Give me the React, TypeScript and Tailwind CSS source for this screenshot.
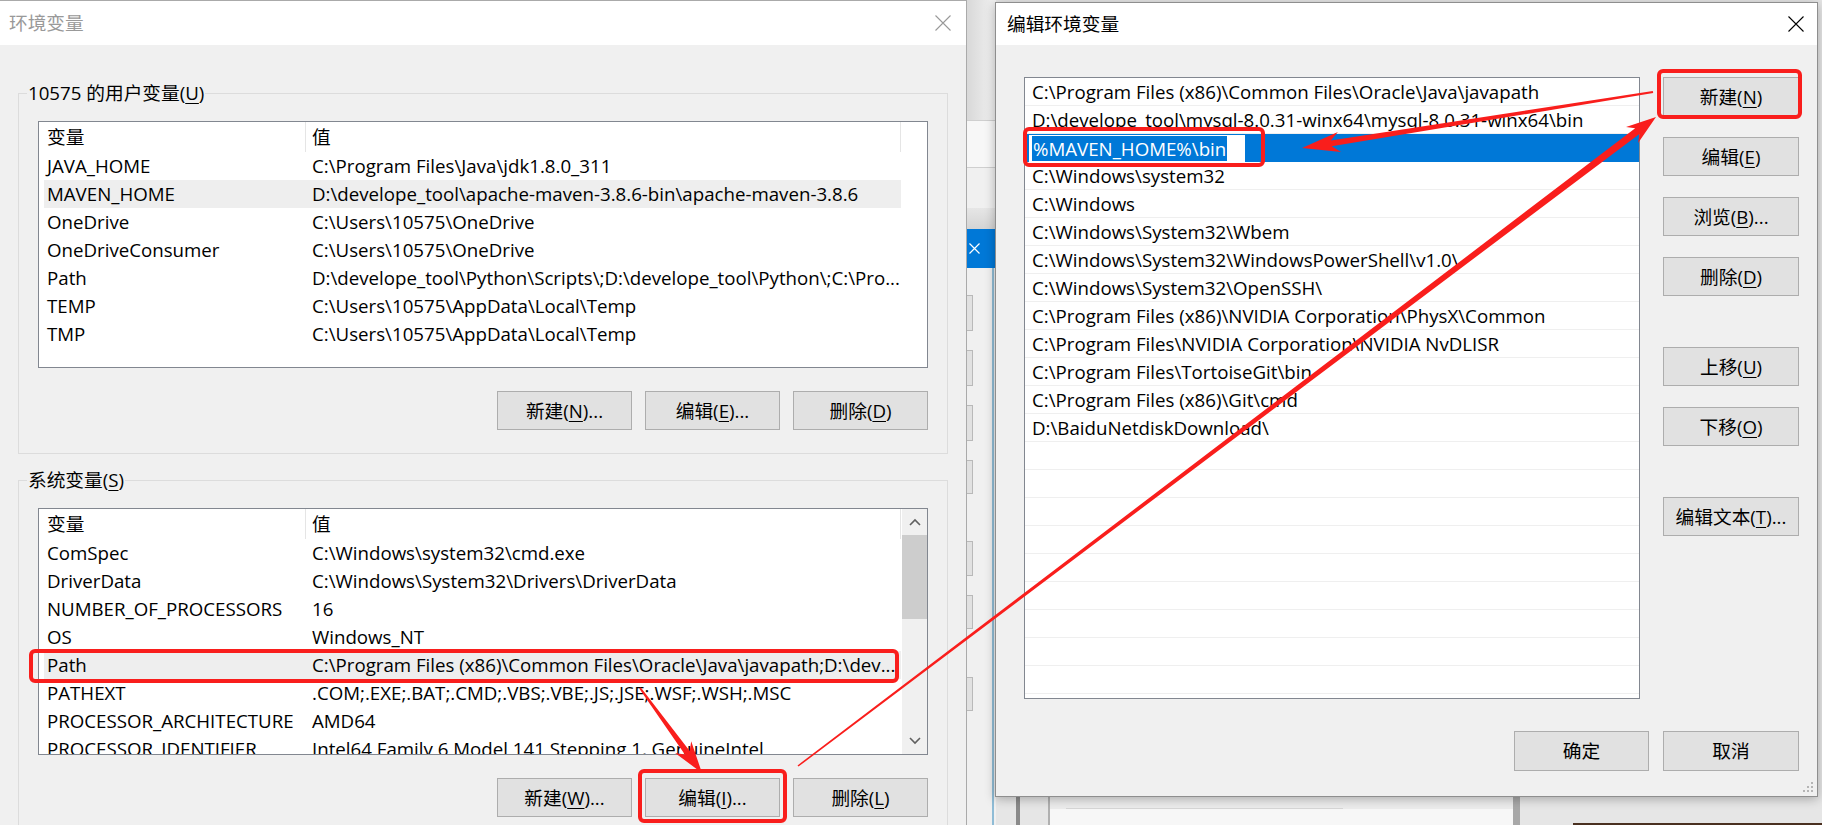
import React from "react";

const RED = "#f91e1c";

const userVars: [string, string][] = [
  ["JAVA_HOME", "C:\\Program Files\\Java\\jdk1.8.0_311"],
  ["MAVEN_HOME", "D:\\develope_tool\\apache-maven-3.8.6-bin\\apache-maven-3.8.6"],
  ["OneDrive", "C:\\Users\\10575\\OneDrive"],
  ["OneDriveConsumer", "C:\\Users\\10575\\OneDrive"],
  ["Path", "D:\\develope_tool\\Python\\Scripts\\;D:\\develope_tool\\Python\\;C:\\Pro..."],
  ["TEMP", "C:\\Users\\10575\\AppData\\Local\\Temp"],
  ["TMP", "C:\\Users\\10575\\AppData\\Local\\Temp"],
];

const sysVars: [string, string][] = [
  ["ComSpec", "C:\\Windows\\system32\\cmd.exe"],
  ["DriverData", "C:\\Windows\\System32\\Drivers\\DriverData"],
  ["NUMBER_OF_PROCESSORS", "16"],
  ["OS", "Windows_NT"],
  ["Path", "C:\\Program Files (x86)\\Common Files\\Oracle\\Java\\javapath;D:\\dev..."],
  ["PATHEXT", ".COM;.EXE;.BAT;.CMD;.VBS;.VBE;.JS;.JSE;.WSF;.WSH;.MSC"],
  ["PROCESSOR_ARCHITECTURE", "AMD64"],
  ["PROCESSOR_IDENTIFIER", "Intel64 Family 6 Model 141 Stepping 1, GenuineIntel"],
];

const pathItems: string[] = [
  "C:\\Program Files (x86)\\Common Files\\Oracle\\Java\\javapath",
  "D:\\develope_tool\\mysql-8.0.31-winx64\\mysql-8.0.31-winx64\\bin",
  "%MAVEN_HOME%\\bin",
  "C:\\Windows\\system32",
  "C:\\Windows",
  "C:\\Windows\\System32\\Wbem",
  "C:\\Windows\\System32\\WindowsPowerShell\\v1.0\\",
  "C:\\Windows\\System32\\OpenSSH\\",
  "C:\\Program Files (x86)\\NVIDIA Corporation\\PhysX\\Common",
  "C:\\Program Files\\NVIDIA Corporation\\NVIDIA NvDLISR",
  "C:\\Program Files\\TortoiseGit\\bin",
  "C:\\Program Files (x86)\\Git\\cmd",
  "D:\\BaiduNetdiskDownload\\",
  "", "", "", "", "", "", "", "", "",
];

function U({ c }: { c: string }) {
  return <span className="underline decoration-1 underline-offset-[3px]">{c}</span>;
}

function Btn({ children, className = "" }: { children: React.ReactNode; className?: string }) {
  return (
    <div
      className={
        "flex items-center justify-center bg-[#e1e1e1] border border-[#adadad] whitespace-nowrap shrink-0 " +
        className
      }
    >
      {children}
    </div>
  );
}

function XIcon({ color }: { color: string }) {
  return (
    <svg width="16" height="16" viewBox="0 0 16 16">
      <path d="M0.5 0.5 L15.5 15.5 M15.5 0.5 L0.5 15.5" stroke={color} strokeWidth="1.1" fill="none" />
    </svg>
  );
}

function Chevron({ up }: { up?: boolean }) {
  return (
    <svg width="12" height="8" viewBox="0 0 12 8">
      <path
        d={up ? "M1 7 L6 2 L11 7" : "M1 1 L6 6 L11 1"}
        stroke="#606060"
        strokeWidth="1.6"
        fill="none"
      />
    </svg>
  );
}

function Header() {
  return (
    <div className="h-[30px] flex shrink-0">
      <div className="w-[267px] pl-[8px] flex items-center border-r border-[#e5e5e5]">变量</div>
      <div className="w-[595px] pl-[6px] flex items-center border-r border-[#e5e5e5]">值</div>
    </div>
  );
}

function VarRow({ name, value, hl }: { name: string; value: string; hl?: boolean }) {
  return (
    <div
      className={
        "ml-[5px] w-[857px] h-[28px] shrink-0 flex items-center whitespace-nowrap " +
        (hl ? "bg-[#eeeeee]" : "bg-white")
      }
    >
      <div className="w-[265px] pl-[3px] shrink-0">{name}</div>
      <div className="pl-[3px] shrink-0">{value}</div>
    </div>
  );
}

function arrow(
  x1: number,
  y1: number,
  x2: number,
  y2: number,
  tailW: number,
  shaftW: number,
  headLen: number,
  headHalf: number
) {
  const dx = x2 - x1;
  const dy = y2 - y1;
  const L = Math.hypot(dx, dy);
  const ux = dx / L;
  const uy = dy / L;
  const nx = -uy;
  const ny = ux;
  const bx = x2 - ux * headLen;
  const by = y2 - uy * headLen;
  const sx = x2 - ux * headLen * 0.78;
  const sy = y2 - uy * headLen * 0.78;
  const p: [number, number][] = [
    [x1 + (nx * tailW) / 2, y1 + (ny * tailW) / 2],
    [sx + (nx * shaftW) / 2, sy + (ny * shaftW) / 2],
    [bx + nx * headHalf, by + ny * headHalf],
    [x2, y2],
    [bx - nx * headHalf, by - ny * headHalf],
    [sx - (nx * shaftW) / 2, sy - (ny * shaftW) / 2],
    [x1 - (nx * tailW) / 2, y1 - (ny * tailW) / 2],
  ];
  return p.map((q) => q[0].toFixed(1) + "," + q[1].toFixed(1)).join(" ");
}

export default function App() {
  return (
    <div className="relative w-[1822px] h-[825px] overflow-hidden bg-[#e6e6e6] text-black text-[18.7px] leading-[22px] font-['Open_Sans','Noto_Sans_CJK_SC',sans-serif]">
      {/* background window strip between dialogs */}
      <div className="absolute left-[940px] top-0 w-[56px] h-[825px] flex flex-col bg-[#f0f0f0]">
        <div className="h-[120px] bg-gradient-to-r from-[#f4f4f4] via-[#d9d9d9] to-[#f2f2f2]" />
        <div className="h-[48px] bg-[#f7f7f7] border-t border-[#cfcfcf] border-b" />
        <div className="h-[40px] bg-[#f0f0f0]" />
        <div className="h-[21px] bg-gradient-to-b from-[#e6e6e6] to-[#d4d4d4]" />
        <div className="h-[39px] bg-[#0078d7] flex items-center pl-[29px]">
          <svg width="11" height="11" viewBox="0 0 11 11">
            <path d="M0.5 0.5 L10.5 10.5 M10.5 0.5 L0.5 10.5" stroke="#fff" strokeWidth="1.2" />
          </svg>
        </div>
        <div className="flex-1 flex">
          <div className="w-[33px] flex flex-col pt-[27px] gap-[19px]">
            <div className="h-[36px] border border-[#b9b9b9] bg-[#e1e1e1]" />
            <div className="h-[36px] border border-[#b9b9b9] bg-[#e1e1e1]" />
            <div className="h-[36px] border border-[#b9b9b9] bg-[#e1e1e1]" />
            <div className="h-[34px] border border-[#b9b9b9] bg-[#e1e1e1]" />
            <div className="h-[35px] border border-[#b9b9b9] bg-[#e1e1e1] mt-[28px]" />
            <div className="h-[34px] border border-[#b9b9b9] bg-[#e1e1e1]" />
            <div className="h-[34px] border border-[#b9b9b9] bg-[#e1e1e1] mt-[29px]" />
          </div>
          <div className="w-[19px]" />
          <div className="w-[2px] bg-[#8fbcd6]" />
        </div>
      </div>

      {/* background under right dialog */}
      <div className="absolute left-[1016px] top-[797px] w-[4px] h-[28px] bg-[#8a8a8a]" />
      <div className="absolute left-[1048px] top-[797px] w-[2px] h-[28px] bg-[#b0b0b0]" />
      <div className="absolute left-[1050px] top-[797px] w-[463px] h-[28px] bg-[#f7f7f7] border-t-[12px] border-[#ececec]" />
      <div className="absolute left-[1066px] top-[808px] w-[277px] h-[1px] bg-[#d6d6d6]" />
      <div className="absolute left-[1513px] top-[797px] w-[7px] h-[28px] bg-[#a8a8a8]" />
      <div className="absolute left-[1573px] top-[823px] w-[249px] h-[2px] bg-[#4a3020]" />

      {/* left dialog: 环境变量 */}
      <div className="absolute left-0 top-0 w-[967px] h-[900px] bg-[#f0f0f0] border-t border-r border-[#aaaaaa] flex flex-col">
        <div className="h-[44px] shrink-0 bg-white flex items-center justify-between pl-[9px] pr-[15px]">
          <span className="text-[#999999]">环境变量</span>
          <XIcon color="#999999" />
        </div>
        <div className="pl-[18px] pt-[37px] flex flex-col">
          <fieldset className="w-[930px] border border-[#dcdcdc] pb-[23px]">
            <legend className="ml-[8px] px-[1px] leading-[22px]">
              10575 的用户变量(<U c="U" />)
            </legend>
            <div className="ml-[19px] mt-[17px] w-[890px] h-[247px] border border-[#828790] bg-white overflow-hidden flex flex-col">
              <Header />
              {userVars.map(([n, v]) => (
                <VarRow key={n + v} name={n} value={v} hl={n === "MAVEN_HOME"} />
              ))}
            </div>
            <div className="ml-[19px] mt-[23px] w-[890px] flex justify-end gap-[13px]">
              <Btn className="w-[135px] h-[39px]">
                新建(<U c="N" />)...
              </Btn>
              <Btn className="w-[135px] h-[39px]">
                编辑(<U c="E" />)...
              </Btn>
              <Btn className="w-[135px] h-[39px]">
                删除(<U c="D" />)
              </Btn>
            </div>
          </fieldset>

          <fieldset className="w-[930px] mt-[15px] border border-[#dcdcdc] pb-[23px]">
            <legend className="ml-[8px] px-[1px] leading-[22px]">
              系统变量(<U c="S" />)
            </legend>
            <div className="ml-[19px] mt-[17px] w-[890px] h-[247px] border border-[#828790] bg-white overflow-hidden flex">
              <div className="w-[863px] flex flex-col overflow-hidden">
                <Header />
                {sysVars.map(([n, v]) => (
                  <VarRow key={n + v} name={n} value={v} hl={n === "Path"} />
                ))}
              </div>
              <div className="w-[25px] flex flex-col bg-[#f0f0f0]">
                <div className="h-[26px] flex items-center justify-center">
                  <Chevron up />
                </div>
                <div className="h-[84px] bg-[#cdcdcd]" />
                <div className="flex-1" />
                <div className="h-[26px] flex items-center justify-center">
                  <Chevron />
                </div>
              </div>
            </div>
            <div className="ml-[19px] mt-[23px] w-[890px] flex justify-end gap-[13px]">
              <Btn className="w-[135px] h-[39px]">
                新建(<U c="W" />)...
              </Btn>
              <Btn className="w-[135px] h-[39px]">
                编辑(<U c="I" />)...
              </Btn>
              <Btn className="w-[135px] h-[39px]">
                删除(<U c="L" />)
              </Btn>
            </div>
          </fieldset>
        </div>
      </div>

      {/* right dialog: 编辑环境变量 */}
      <div className="absolute left-[995px] top-[2px] w-[823px] h-[795px] bg-[#f0f0f0] border border-[#8e8e8e] shadow-[0_2px_10px_rgba(0,0,0,0.28)] flex flex-col">
        <div className="h-[42px] shrink-0 bg-white flex items-center justify-between pl-[11px] pr-[13px]">
          <span>编辑环境变量</span>
          <XIcon color="#000000" />
        </div>
        <div className="flex pl-[28px] pt-[32px] gap-[23px]">
          <div className="w-[616px] h-[622px] border border-[#828790] bg-white overflow-hidden flex flex-col">
            {pathItems.map((p, i) =>
              i === 2 ? (
                <div key={i} className="h-[28px] shrink-0 bg-[#0078d7] flex items-center pl-[4px]">
                  <div className="w-[216px] h-[27px] bg-white border border-white flex items-center pl-[2px]">
                    <span className="bg-[#0078d7] text-white px-[1px] leading-[25px] whitespace-nowrap">{p}</span>
                  </div>
                </div>
              ) : (
                <div
                  key={i}
                  className="h-[28px] shrink-0 border-b border-[#efefef] flex items-center pl-[7px] whitespace-nowrap"
                >
                  {p}
                </div>
              )
            )}
          </div>
          <div className="w-[136px] flex flex-col">
            <Btn className="h-[39px]">
              新建(<U c="N" />)
            </Btn>
            <Btn className="h-[39px] mt-[21px]">
              编辑(<U c="E" />)
            </Btn>
            <Btn className="h-[39px] mt-[21px]">
              浏览(<U c="B" />)...
            </Btn>
            <Btn className="h-[39px] mt-[21px]">
              删除(<U c="D" />)
            </Btn>
            <Btn className="h-[39px] mt-[51px]">
              上移(<U c="U" />)
            </Btn>
            <Btn className="h-[39px] mt-[21px]">
              下移(<U c="O" />)
            </Btn>
            <Btn className="h-[39px] mt-[51px]">
              编辑文本(<U c="T" />)...
            </Btn>
          </div>
        </div>
        <div className="flex justify-end gap-[14px] pr-[18px] mt-[32px]">
          <Btn className="w-[135px] h-[40px]">确定</Btn>
          <Btn className="w-[136px] h-[40px]">取消</Btn>
        </div>
        <div className="flex-1 flex justify-end items-end pr-[3px] pb-[3px]">
          <svg width="12" height="12" viewBox="0 0 12 12">
            <g fill="#b5b5b5">
              <rect x="9" y="1" width="2" height="2" />
              <rect x="5" y="5" width="2" height="2" />
              <rect x="9" y="5" width="2" height="2" />
              <rect x="1" y="9" width="2" height="2" />
              <rect x="5" y="9" width="2" height="2" />
              <rect x="9" y="9" width="2" height="2" />
            </g>
          </svg>
        </div>
      </div>

      {/* red annotations */}
      <svg
        className="absolute left-0 top-0 pointer-events-none"
        width="1822"
        height="825"
        viewBox="0 0 1822 825"
      >
        <g fill="none" stroke={RED} strokeWidth="4">
          <rect x="31" y="651" width="866" height="30" rx="4" />
          <rect x="640" y="771" width="145" height="50" rx="4" />
          <rect x="1659" y="71" width="141" height="46" rx="4" />
          <rect x="1025" y="129" width="238" height="36" rx="4" />
        </g>
        <g fill={RED}>
          <polygon points={arrow(640, 688, 702, 773, 2, 6, 32, 10)} />
          <polygon points={arrow(798, 766, 1656, 117, 1.5, 7, 30, 10)} />
          <polygon points={arrow(1653, 92, 1302, 148, 2, 6, 38, 10)} />
        </g>
      </svg>
    </div>
  );
}
